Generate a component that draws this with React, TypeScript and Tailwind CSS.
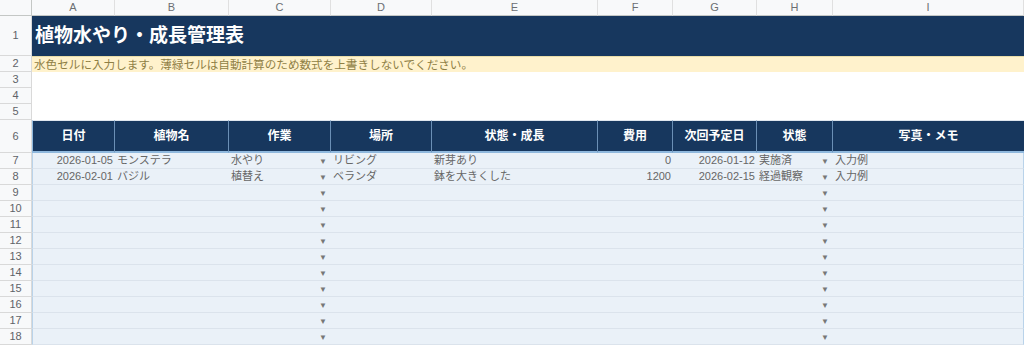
import React from "react";

const font = { fontFamily: '"Liberation Sans", "Noto Sans CJK JP", sans-serif' };

const cols = ["A", "B", "C", "D", "E", "F", "G", "H", "I"];
const headers = ["日付", "植物名", "作業", "場所", "状態・成長", "費用", "次回予定日", "状態", "写真・メモ"];

type Row = [string, string, string, string, string, string, string, string, string];

const data: Row[] = [
  ["2026-01-05", "モンステラ", "水やり", "リビング", "新芽あり", "0", "2026-01-12", "実施済", "入力例"],
  ["2026-02-01", "バジル", "植替え", "ベランダ", "鉢を大きくした", "1200", "2026-02-15", "経過観察", "入力例"],
];

const rightAligned = [0, 5, 6];
const dropdown = [2, 7];

function RowNum({ n, h }: { n: number; h: string }) {
  return (
    <div
      className={`${h} flex items-center justify-center bg-[#f8f9fa] border-r border-b border-[#d9d9d9] text-[11px] text-[#5f6368]`}
    >
      {n}
    </div>
  );
}

function Arrow() {
  return <span className="text-[8px] text-[#777] leading-none mr-[4px] mt-[2px]">▼</span>;
}

export default function App() {
  const rows: Row[] = [...data];
  while (rows.length < 12) rows.push(["", "", "", "", "", "", "", "", ""]);

  return (
    <div style={font} className="w-[1024px] h-[345px] overflow-hidden bg-white">
      <div className="grid grid-cols-[32px_83px_114px_102px_101px_166px_75px_84px_76px_191px]">
        {/* column letters */}
        <div className="h-[16px] bg-[#f8f9fa] border-r border-b border-[#c4c7c5]" />
        {cols.map((c) => (
          <div
            key={c}
            className="h-[16px] flex items-center justify-center bg-[#f8f9fa] border-r border-b border-[#e0e0e0] border-b-[#c4c7c5] text-[11px] text-[#6b6f73]"
          >
            {c}
          </div>
        ))}

        {/* row 1: title */}
        <RowNum n={1} h="h-[40px]" />
        <div className="col-span-9 h-[40px] flex items-center bg-[#17375e] pl-[3px] text-[19px] font-bold text-white">
          植物水やり・成長管理表
        </div>

        {/* row 2: note */}
        <RowNum n={2} h="h-[16px]" />
        <div className="col-span-9 h-[16px] flex items-center bg-[#fff2cc] border-t border-[#e8dca8] pl-[2px] text-[11.6px] text-[#8f7f45] whitespace-nowrap">
          水色セルに入力します。薄緑セルは自動計算のため数式を上書きしないでください。
        </div>

        {/* rows 3-5 */}
        {[3, 4, 5].map((n) => (
          <React.Fragment key={n}>
            <RowNum n={n} h="h-[16px]" />
            <div className="col-span-9 h-[16px] bg-white" />
          </React.Fragment>
        ))}

        {/* row 6: headers */}
        <RowNum n={6} h="h-[33px]" />
        {headers.map((t, i) => (
          <div
            key={t + i}
            className={`h-[33px] flex items-center justify-center bg-[#17375e] border-t border-t-[#dfe6ee] border-b-2 border-b-[#8fb8dd] text-[12px] font-bold text-white ${
              i < 8 ? "border-r border-r-[#6b8fb5]" : ""
            } ${i === 0 ? "border-l border-l-[#8fb8dd]" : ""}`}
          >
            {t}
          </div>
        ))}

        {/* data rows */}
        {rows.map((r, ri) => (
          <React.Fragment key={ri}>
            <RowNum n={7 + ri} h="h-[16px]" />
            {r.map((v, ci) => (
              <div
                key={ci}
                className={`h-[16px] flex items-center bg-[#eaf1f8] border-b border-[#dbe3ec] text-[11px] text-[#666] whitespace-nowrap overflow-hidden ${
                  rightAligned.includes(ci) ? "justify-end pr-[2px]" : "justify-between pl-[2px]"
                } ${ci === 0 ? "border-l border-l-[#b9d3ea]" : ""} ${ci === 8 ? "border-r border-r-[#b9d3ea]" : ""}`}
              >
                <span>{v}</span>
                {dropdown.includes(ci) && <Arrow />}
              </div>
            ))}
          </React.Fragment>
        ))}
      </div>
    </div>
  );
}
